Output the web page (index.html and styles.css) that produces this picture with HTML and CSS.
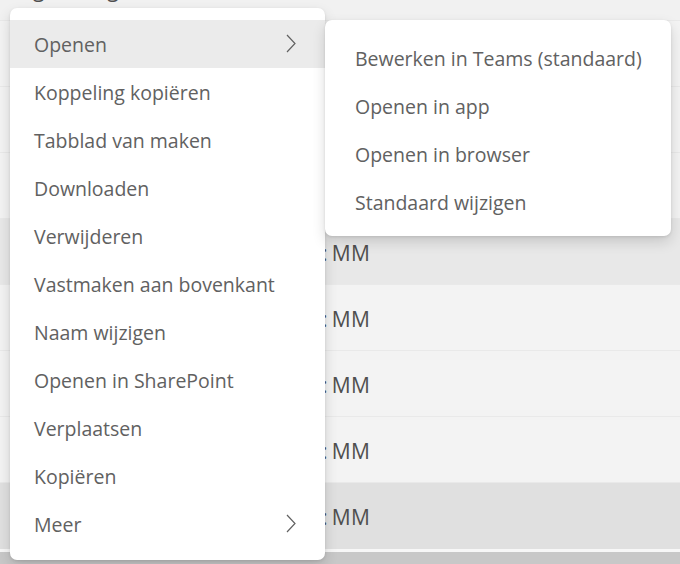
FILE: index.html
```html
<!DOCTYPE html>
<html>
<head>
<meta charset="utf-8">
<link rel="stylesheet" href="styles.css">
</head>
<body>
<div class="list">
  <div class="row top"><span class="title">Vergadering</span></div>
  <div class="row"></div>
  <div class="row"></div>
  <div class="row"></div>
  <div class="row hover"><span class="cell"><span class="colon">:</span>MM</span></div>
  <div class="row"><span class="cell"><span class="colon">:</span>MM</span></div>
  <div class="row"><span class="cell"><span class="colon">:</span>MM</span></div>
  <div class="row"><span class="cell"><span class="colon">:</span>MM</span></div>
  <div class="row selected"><span class="cell"><span class="colon">:</span>MM</span></div>
  <div class="gap"></div>
  <div class="footer"></div>
</div>

<div class="menu main">
  <div class="item active"><span>Openen</span><svg class="chev" width="10" height="19" viewBox="0 0 10 19"><polyline points="1,1 9,9.5 1,18" fill="none" stroke="#616161" stroke-width="1.2"/></svg></div>
  <div class="item"><span>Koppeling kopiëren</span></div>
  <div class="item"><span>Tabblad van maken</span></div>
  <div class="item"><span>Downloaden</span></div>
  <div class="item"><span>Verwijderen</span></div>
  <div class="item"><span>Vastmaken aan bovenkant</span></div>
  <div class="item"><span>Naam wijzigen</span></div>
  <div class="item"><span>Openen in SharePoint</span></div>
  <div class="item"><span>Verplaatsen</span></div>
  <div class="item"><span>Kopiëren</span></div>
  <div class="item"><span>Meer</span><svg class="chev" width="10" height="19" viewBox="0 0 10 19"><polyline points="1,1 9,9.5 1,18" fill="none" stroke="#616161" stroke-width="1.2"/></svg></div>
</div>

<div class="menu sub">
  <div class="item"><span>Bewerken in Teams (standaard)</span></div>
  <div class="item"><span>Openen in app</span></div>
  <div class="item"><span>Openen in browser</span></div>
  <div class="item"><span>Standaard wijzigen</span></div>
</div>
</body>
</html>
```
FILE: styles.css
```css
html, body {
  margin: 0;
  padding: 0;
  height: 564px;
  overflow: hidden;
}
body {
  background: #f3f3f3;
  font-family: "Open Sans", "Noto Sans", sans-serif;
  color: #616161;
  position: relative;
}
.list {
  display: flex;
  flex-direction: column;
}
.row {
  height: 65px;
  border-bottom: 1px solid #e9e9e9;
  background: #f3f3f3;
  display: flex;
  align-items: center;
  font-size: 21px;
  color: #4f4f4f;
}
.row.top {
  margin-top: -45px;
  background: #f1f1f1;
}
.row.hover { background: #e8e8e8; }
.row.selected { background: #e0e0e0; border-bottom: none; height: 66px; }
.title {
  padding-left: 0;
  margin-top: 2px;
}
.cell {
  padding-left: 322px;
  letter-spacing: 0.3px;
  margin-top: 2px;
}
.colon { margin-right: 4px; }
.gap { height: 3px; background: #f7f7f7; }
.footer { height: 40px; background: #c8c8c8; }

.menu {
  position: absolute;
  background: #ffffff;
  border-radius: 7px;
  box-shadow: 0 6px 14px rgba(0,0,0,0.14), 0 1px 3px rgba(0,0,0,0.10);
  font-size: 19.5px;
  color: #616161;
}
.main {
  left: 10px;
  top: 8px;
  width: 315px;
  padding: 12px 0;
  z-index: 1;
}
.sub {
  left: 325px;
  top: 20px;
  width: 346px;
  padding: 14px 0 10px;
  z-index: 2;
}
.item {
  height: 48px;
  display: flex;
  align-items: center;
  justify-content: space-between;
  padding: 1px 29px 0 24px;
  box-sizing: border-box;
}
.sub .item { padding-left: 30px; padding-top: 0; }
.item.active { background: #ebebeb; }
.chev { display: block; margin-top: -3px; }
```
